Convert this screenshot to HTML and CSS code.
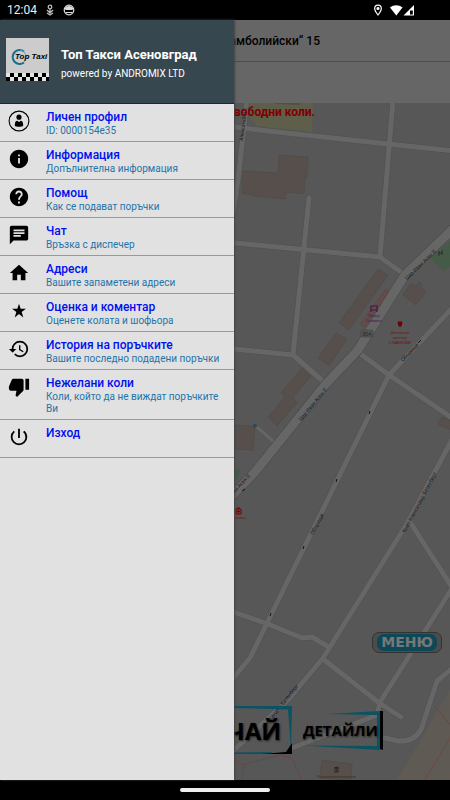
FILE: index.html
```
<!DOCTYPE html>
<html lang="bg">
<head>
    <meta charset="UTF-8">
    <meta name="viewport" content="width=device-width, initial-scale=1.0">
    <title>Топ Такси Асеновград</title>
    <link rel="stylesheet" href="styles.css">
</head>
<body>
    <!-- Status bar -->
    <div class="status-bar">
        <span class="clock">12:04</span>
        <svg class="status-icon" viewBox="0 0 12 12" fill="none" stroke="#bbb" stroke-width="1.3">
            <circle cx="6" cy="3" r="1.8"/>
            <path d="M6 5v4M3 6l3 3 3-3M3 9l3 2 3-2"/>
        </svg>
        <svg class="status-icon" viewBox="0 0 12 12">
            <circle cx="6" cy="6" r="4.8" fill="none" stroke="#ddd" stroke-width="1.2"/>
            <path d="M1.500 5C3 1 9 1 10.500 5L9 6H3z" fill="#ddd"/>
            <path d="M3 8l1 1 1-1 1 1 1-1 1 1 1-1" fill="none" stroke="#ddd"/>
        </svg>
        <div class="status-right">
            <svg class="status-icon" viewBox="0 0 12 12" fill="none" stroke="#fff" stroke-width="1.2">
                <path d="M6 11C4 8.500 2.700 6.500 2.700 4.500a3.300 3.300 0 0 1 6.600 0C9.300 6.500 8 8.500 6 11z"/>
                <circle cx="6" cy="4.500" r="1" fill="#fff"/>
            </svg>
            <svg class="signal" viewBox="0 0 24 11">
                <path d="M0 2.500C4 -.5 8.500 -.5 12.500 2.500L6.300 10.500z" fill="#fff"/>
                <path d="M24 0v10.500H13.500z" fill="#fff"/>
                <path d="M20 5.500h2.800v4H20z" fill="#000"/>
            </svg>
        </div>
    </div>

    <div class="screen">
        <!-- Order page behind the drawer -->
        <main class="order-page">
            <div class="address-row"><span>амболийски“ 15</span></div>
            <div class="note-row"></div>
            <div class="map">
                <svg class="map-canvas" viewBox="0 103 450 677" preserveAspectRatio="xMidYMid slice">
                    <!-- areas -->
                    <path d="M250 103H313L312 132 257 126 250 118z" fill="#5f5e4b"/>
                    <path d="M275 103H300V105L275 104z" fill="#544e4a"/>
                    <path d="M450 241L430 258 443 271 450 267zM234 469H241L238 478 234 482z" fill="#465a48"/>
                    <path d="M450 690L397 780H450z" fill="#5f5b54"/>

                    <!-- buildings -->
                    <g fill="#564f4b" stroke="#4f4945" stroke-width=".6">
                        <path d="M279 155L308 157 307 177 305 177 304 194 286 192 285 199 255 196 242 193 243 171 278 173z"/>
                        <path d="M378 269L388 275 349 330 339 323z"/>
                        <path d="M336 333L347 339 329 366 318 358z"/>
                        <path d="M302 368L311 376 293 397 297 403 277 426 268 417 285 397 281 393z"/>
                        <path d="M230 425L255 426 253 450 230 449z"/>
                        <path d="M411 283L416 286 419 282 422 284 421 287 426 292 416 305 403 295z"/>
                        <path d="M442 417L451 421V430L438 424z"/>
                        <path d="M322 760L352 764 351 781 320 778z"/>
                        <path d="M386 289L389 292 364 327 360 324z" fill="#664b46"/>
                    </g>

                    <!-- streets -->
                    <g class="street street-edge">
                        <path d="M247 100L238 180 233 213M225 126L268 131 388 144 455 151M393 100L380 257 405 275M225 242L380 257M309 198L293 355 325 383M225 348L293 355"/>
                        <path d="M358 352L389 375 455 420M455 305L389 375M357 440L270 617 250 658 230 682M389 375L357 440M455 434L408 522 323 658 288 700 234 750M410 522L455 592M452 588L432 620 380 702 377 715 292 748"/>
                        <path d="M225 609L268 624 302 638 312 637 327 646M323 659L378 702 401 717M455 666L437 681 422 727Q416 742 398 741L385 738"/>
                    </g>
                    <g class="street">
                        <path d="M247 100L238 180 233 213M225 126L268 131 388 144 455 151M393 100L380 257 405 275M225 242L380 257M309 198L293 355 325 383M225 348L293 355"/>
                        <path d="M358 352L389 375 455 420M455 305L389 375M357 440L270 617 250 658 230 682M389 375L357 440M455 434L408 522 323 658 288 700 234 750M410 522L455 592M452 588L432 620 380 702 377 715 292 748"/>
                        <path d="M225 609L268 624 302 638 312 637 327 646M323 659L378 702 401 717M455 666L437 681 422 727Q416 742 398 741L385 738"/>
                    </g>
                    <path class="lane" d="M257 427L275 443"/>
                    <path class="main-road main-road-edge" d="M455 227L405 275 358 350 325 385 280 441 255 472 230 498"/>
                    <path class="main-road" d="M455 227L405 275 358 350 325 385 280 441 255 472 230 498"/>
                    <path class="footpath" d="M230 757L242 765 280 755 292 758 302 780M244 765L242 780M435 706L452 727M452 735L425 780"/>

                    <!-- street names -->
                    <g class="street-name">
                        <text transform="translate(243 141) rotate(-84)">Александър С</text>
                        <text transform="translate(407 280) rotate(-44)">Цар Иван Асен II</text>
                        <text transform="translate(301 421) rotate(-50)">Цар Иван Асен II</text>
                        <text transform="translate(230 498) rotate(-47)">Иван Асен II</text>
                        <text transform="translate(403 362) rotate(-47)">Оборище</text>
                        <text transform="translate(313 535) rotate(-62)">Оборище</text>
                        <text transform="translate(405 533) rotate(-62)">Княз Александър Батенберг</text>
                        <text transform="translate(264 729) rotate(-51)">Александър Батенберг</text>
                    </g>
                    <path d="M418 343l3-3M369 414l1-3M336 482l1-3M303 549l1-3M270 616l1-3M242 491l3-2" stroke="#111"/>

                    <!-- places -->
                    <rect x="361" y="330" width="12" height="7" rx="1" fill="#565656" stroke="#424242" stroke-width=".6"/>
                    <text class="road-number" x="367" y="336">804</text>
                    <path d="M371 306h6v4h-6zM371 310v2M377 310v2" fill="none" stroke="#48154d" stroke-width="1.200"/>
                    <g class="place shop">
                        <text x="374" y="317">Пазар</text>
                        <text x="374" y="322">Гривата</text>
                    </g>
                    <path d="M398 322h4l-1 4h-2z" fill="#700" stroke="#600"/>
                    <g class="place health">
                        <text x="400" y="334">Дентален</text>
                        <text x="400" y="339">център</text>
                        <text x="400" y="344">СЛАВКОВИ</text>
                        <text x="239" y="519">Аптека</text>
                    </g>
                    <path d="M236 509h5v5h-5zM237 508h3" fill="none" stroke="#700"/>
                    <path d="M238.500 510v3M237 511.500h3" stroke="#700"/>
                    <text class="parking" x="253" y="428">P</text>
                    <path d="M438 253h5M439 251v5M442 250v5" stroke="#222" fill="none" stroke-width=".7"/>
                    <path d="M334 768l2.500-1 2.500 1zM335 768v4M336.500 768v4M338 768v4M334 772h5" stroke="#35241a" fill="#35241a" stroke-width=".8"/>
                    <text class="place museum" x="336" y="778">Палеонтологически</text>
                </svg>

                <p class="no-cars">вободни коли.</p>

                <button class="menu-btn" type="button"><span>МЕНЮ</span></button>

                <div class="map-actions">
                    <button class="order-btn" type="button">
                        <svg viewBox="0 0 58 48" preserveAspectRatio="none">
                            <path d="M0 0H58L57 44 54 3.500 0 2zM0 46.500L40 46 30 48H0z" fill="#0b5263"/>
                            <path d="M58 37V48H28L52 46z" fill="#000"/>
                        </svg>
                        <span>ЧАЙ</span>
                    </button>
                    <button class="details-btn" type="button">
                        <svg viewBox="0 0 80 39" preserveAspectRatio="none">
                            <path d="M25 3L77 0V39L0 34.500 74 35V4z" fill="#0b5263"/>
                            <path d="M77 0h3v39l-3-1z" fill="#000"/>
                        </svg>
                        <span>ДЕТАЙЛИ</span>
                    </button>
                </div>
            </div>
        </main>

        <!-- Side drawer -->
        <aside class="drawer">
            <header class="drawer-header">
                <svg class="logo" viewBox="0 0 43 43">
                    <path fill="#ccc" d="M0 0h43v43H0z"/>
                    <path d="M18 13.500A7 7 0 1 0 18 24.500" fill="none" stroke="#176f8e" stroke-width="2"/>
                    <path d="M14 12A7 7 0 0 1 18 24" fill="none" stroke="#5b9db0" stroke-width="1"/>
                    <text class="logo-text" x="9" y="21">Top Taxi</text>
                    <path fill="#e4e4e4" d="M0 35h43v8H0z"/>
                    <path d="M4 37h39" stroke="#000" stroke-width="4" stroke-dasharray="4 4"/>
                    <path d="M0 41h43" stroke="#000" stroke-width="4" stroke-dasharray="4 4"/>
                </svg>
                <div class="brand">
                    <h1>Топ Такси Асеновград</h1>
                    <p>powered by ANDROMIX LTD</p>
                </div>
            </header>
            <nav>
                <a class="item" href="#profile">
                    <svg viewBox="0 0 24 24">
                        <circle cx="12" cy="12" r="10.800" fill="none" stroke="#000" stroke-width="1.200"/>
                        <circle cx="12" cy="7.800" r="2.800"/>
                        <path d="M7.500 17.500v-2C7.500 13 9 11.800 10 11.800L12 13l2-1.200c1 0 2.500 1.200 2.500 3.700v2c-1 1-8 1-9 0z"/>
                    </svg>
                    <span class="item-text"><strong>Личен профил</strong><small>ID: 0000154e35</small></span>
                </a>
                <a class="item" href="#info">
                    <svg viewBox="0 0 24 24"><path d="M12 2C6.480 2 2 6.480 2 12s4.480 10 10 10 10-4.480 10-10S17.520 2 12 2zm1 15h-2v-6h2v6zm0-8h-2V7h2v2z"/></svg>
                    <span class="item-text"><strong>Информация</strong><small>Допълнителна информация</small></span>
                </a>
                <a class="item" href="#help">
                    <svg viewBox="0 0 24 24"><path d="M12 2C6.480 2 2 6.480 2 12s4.480 10 10 10 10-4.480 10-10S17.520 2 12 2zm1 17h-2v-2h2v2zm2.070-7.750l-.9.920C13.450 12.900 13 13.500 13 15h-2v-.5c0-1.100.45-2.100 1.170-2.830l1.240-1.260c.37-.36.59-.86.59-1.410 0-1.100-.9-2-2-2s-2 .9-2 2H8c0-2.210 1.790-4 4-4s4 1.790 4 4c0 .88-.36 1.680-.93 2.250z"/></svg>
                    <span class="item-text"><strong>Помощ</strong><small>Как се подават поръчки</small></span>
                </a>
                <a class="item" href="#chat">
                    <svg viewBox="0 0 24 24"><path d="M20 2H4c-1.100 0-1.990.9-1.990 2L2 22l4-4h14c1.100 0 2-.9 2-2V4c0-1.100-.9-2-2-2zM6 9h12v2H6V9zm8 5H6v-2h8v2zm4-6H6V6h12v2z"/></svg>
                    <span class="item-text"><strong>Чат</strong><small>Връзка с диспечер</small></span>
                </a>
                <a class="item" href="#addresses">
                    <svg viewBox="0 0 24 24"><path d="M10 20v-6h4v6h5v-8h3L12 3 2 12h3v8z"/></svg>
                    <span class="item-text"><strong>Адреси</strong><small>Вашите запаметени адреси</small></span>
                </a>
                <a class="item" href="#rating">
                    <svg viewBox="0 0 24 24"><path d="M12 4l1.800 5.600h5.700l-4.600 3.400 1.800 6-4.700-3.600L7.300 19l1.800-6-4.600-3.400h5.700z"/></svg>
                    <span class="item-text"><strong>Оценка и коментар</strong><small>Оценете колата и шофьора</small></span>
                </a>
                <a class="item" href="#history">
                    <svg viewBox="0 0 24 24"><path d="M13 3a9 9 0 0 0-9 9H1l3.890 3.890.07.14L9 12H6c0-3.870 3.130-7 7-7s7 3.130 7 7-3.130 7-7 7c-1.930 0-3.680-.79-4.940-2.060l-1.420 1.420A8.954 8.954 0 0 0 13 21a9 9 0 0 0 0-18zm-1 5v5l4.280 2.540.72-1.210-3.500-2.080V8H12z"/></svg>
                    <span class="item-text"><strong>История на поръчките</strong><small>Вашите последно подадени поръчки</small></span>
                </a>
                <a class="item" href="#blocked">
                    <svg viewBox="0 0 24 24"><path d="M15 3H6c-.83 0-1.540.5-1.840 1.220l-3.020 7.050c-.09.23-.14.47-.14.730v2c0 1.100.9 2 2 2h6.310l-.95 4.570-.03.32c0 .41.17.79.44 1.060L9.830 23l6.590-6.590c.36-.36.58-.86.58-1.410V5c0-1.100-.9-2-2-2zm4 0v12h4V3h-4z"/></svg>
                    <span class="item-text"><strong>Нежелани коли</strong><small>Коли, който да не виждат поръчките Ви</small></span>
                </a>
                <a class="item" href="#exit">
                    <svg viewBox="0 0 24 24"><path d="M13 3h-2v10h2V3zm4.830 2.170l-1.420 1.420A6.920 6.920 0 0 1 19 12c0 3.870-3.130 7-7 7s-7-3.130-7-7c0-2.190 1.010-4.140 2.580-5.420L6.170 5.170A8.932 8.932 0 0 0 3 12a9 9 0 0 0 18 0c0-2.740-1.230-5.180-3.170-6.830z"/></svg>
                    <span class="item-text"><strong>Изход</strong></span>
                </a>
            </nav>
        </aside>
    </div>

    <div class="nav-bar"><span class="nav-pill"></span></div>
</body>
</html>
```

FILE: styles.css
```
* {
    box-sizing: border-box;
}
body {
    font-family: Roboto, sans-serif;
    background-color: #000;
    margin: 0;
    min-height: 100vh;
    display: flex;
    flex-direction: column;
}
h1, p {
    margin: 0;
}

/* System bars */
.status-bar {
    height: 20px;
    padding: 0 36px 0 7px;
    display: flex;
    align-items: center;
    gap: 7px;
    color: #eee;
    font-size: 12px;
}
.clock {
    width: 30px;
}
.status-icon {
    width: 12px;
    height: 12px;
}
.status-right {
    margin-left: auto;
    display: flex;
    align-items: center;
    gap: 6px;
}
.signal {
    width: 24px;
    height: 11px;
}
.nav-bar {
    height: 20px;
    display: flex;
    align-items: center;
    justify-content: center;
}
.nav-pill {
    width: 20%;
    height: 4px;
    border-radius: 2px;
    background-color: #eee;
}

/* Order page */
.screen {
    flex: 1;
    position: relative;
    display: flex;
}
.order-page {
    flex: 1;
    display: flex;
    flex-direction: column;
    background-color: #666;
    color: #000;
}
.address-row {
    height: 42px;
    padding-left: 51%;
    display: flex;
    align-items: center;
    border-bottom: 1px solid #4c4c4c;
    font-size: 12px;
    font-weight: 500;
}
.note-row {
    height: 41px;
}
.map {
    flex: 1;
    position: relative;
    overflow: hidden;
    background-color: #575757;
}
.map-canvas {
    position: absolute;
    width: 100%;
    height: 100%;
}
.street {
    fill: none;
    stroke: #666;
    stroke-width: 5px;
    stroke-linecap: round;
    stroke-linejoin: round;
}
.street-edge {
    stroke: #505050;
    stroke-width: 6px;
}
.main-road {
    fill: none;
    stroke: #666;
    stroke-width: 9px;
    stroke-linejoin: round;
}
.main-road-edge {
    stroke: #484848;
    stroke-width: 10px;
}
.lane {
    stroke: #666;
    stroke-width: 3px;
}
.footpath {
    fill: none;
    stroke: #7a3530;
    stroke-width: 1px;
    stroke-dasharray: 1 1;
}
.street-name {
    font: 5px "Noto Sans", sans-serif;
    fill: #111;
}
.road-number {
    font: 5px "Noto Sans", sans-serif;
    text-anchor: middle;
    fill: #222;
}
.place {
    font: 4px "Noto Sans", sans-serif;
    text-anchor: middle;
}
.shop {
    fill: #48154d;
}
.health {
    fill: #7a0c0c;
}
.museum {
    fill: #3a2a20;
}
.parking {
    font: bold 6px "Noto Sans", sans-serif;
    fill: #1d4364;
}
.no-cars {
    position: relative;
    padding: 2px 0 0 52%;
    color: #800000;
    font-size: 12px;
    font-weight: bold;
    line-height: 14px;
}
.menu-btn {
    position: absolute;
    right: 8px;
    bottom: 127px;
    padding: 1px 4px;
    border: 1px solid #333;
    border-radius: 7px;
    background-color: #4c4c4c;
}
.menu-btn span {
    display: block;
    padding: 0 4px;
    border-radius: 7px;
    background-color: #0e4856;
    color: #777;
    font: bold 14px/17px "DejaVu Sans", sans-serif;
}
.map-actions {
    position: absolute;
    left: 52%;
    bottom: 26px;
    display: flex;
    align-items: center;
    gap: 11px;
}
.order-btn, .details-btn {
    position: relative;
    padding: 0;
    border: none;
    background: none;
    color: #000;
    font-family: "Open Sans", sans-serif;
    font-weight: bold;
    text-shadow: 1px 1px 2px #222;
    display: flex;
    align-items: center;
}
.order-btn svg, .details-btn svg {
    position: absolute;
    top: 0;
    left: 0;
    width: 100%;
    height: 100%;
}
.order-btn span, .details-btn span {
    position: relative;
}
.order-btn {
    width: 58px;
    height: 48px;
    padding-right: 11px;
    justify-content: flex-end;
    font-size: 24px;
}
.details-btn {
    width: 80px;
    height: 39px;
    font-size: 15px;
}

/* Drawer */
.drawer {
    position: absolute;
    top: 0;
    bottom: 0;
    left: 0;
    width: 52%;
    background-color: #e1e1e1;
    box-shadow: 1px 0 2px #444;
}
.drawer-header {
    height: 84px;
    padding: 0 6px 4px;
    display: flex;
    align-items: center;
    gap: 12px;
    background-color: #37474f;
    border-bottom: 1px solid #0b2f3f;
    color: #fff;
}
.logo {
    width: 43px;
    height: 43px;
    flex: none;
}
.logo-text {
    font: italic bold 8px "Liberation Sans", sans-serif;
}
.brand {
    padding-top: 8px;
}
.drawer-header h1 {
    font-size: 13px;
    font-weight: bold;
    line-height: 20px;
}
.drawer-header p {
    font-size: 10px;
    line-height: 18px;
}
.item {
    min-height: 38px;
    padding: 6px 8px 4px;
    display: flex;
    gap: 16px;
    border-bottom: 1px solid #999;
    text-decoration: none;
}
.item svg {
    width: 22px;
    height: 22px;
    flex: none;
}
.item-text {
    display: flex;
    flex-direction: column;
    gap: 1px;
}
.item strong {
    color: #0010f0;
    font-size: 12px;
    font-weight: 500;
    line-height: 14px;
}
.item small {
    color: #1f74ab;
    font-size: 10px;
    line-height: 12px;
}
```
